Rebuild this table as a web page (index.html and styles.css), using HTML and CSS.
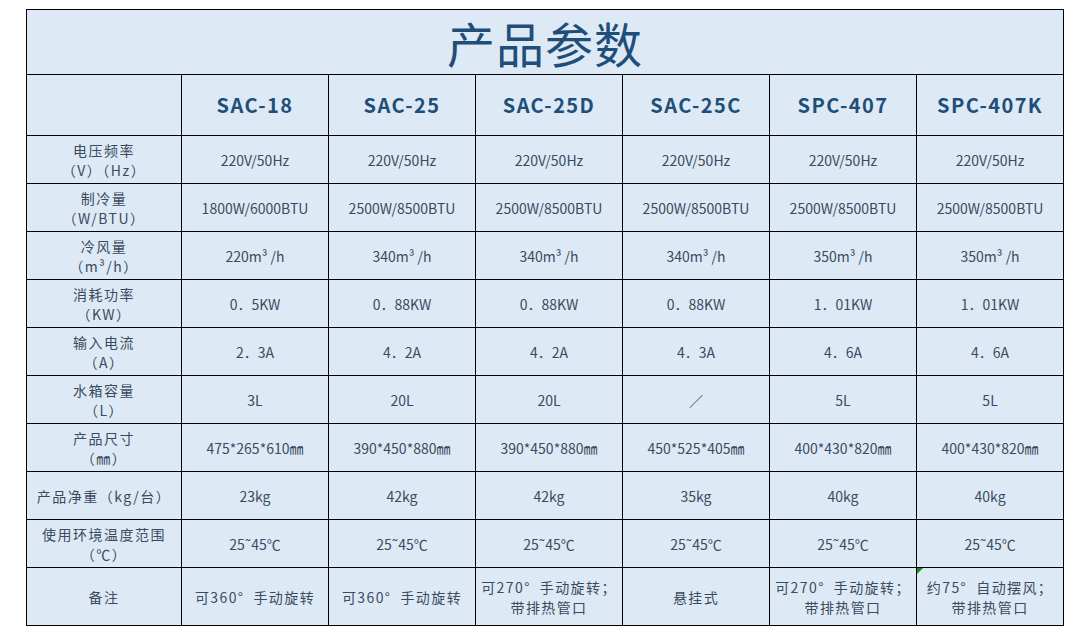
FILE: index.html
```html
<!DOCTYPE html>
<html lang="zh-CN">
<head>
<meta charset="utf-8">
<title>产品参数</title>
<link rel="stylesheet" href="styles.css">
</head>
<body>
<div class="wrap">
<table class="spec">
  <colgroup>
    <col class="c-label">
    <col class="c-val"><col class="c-val"><col class="c-val">
    <col class="c-val"><col class="c-val"><col class="c-val">
  </colgroup>
  <tr class="r-title"><td colspan="7" class="title">产品参数</td></tr>
  <tr class="r-head">
    <td></td>
    <td class="model">SAC-18</td>
    <td class="model">SAC-25</td>
    <td class="model">SAC-25D</td>
    <td class="model">SAC-25C</td>
    <td class="model">SPC-407</td>
    <td class="model">SPC-407K</td>
  </tr>
  <tr class="r-data">
    <td class="label">电压频率<br>（V）（Hz）</td>
    <td>220V/50Hz</td><td>220V/50Hz</td><td>220V/50Hz</td><td>220V/50Hz</td><td>220V/50Hz</td><td>220V/50Hz</td>
  </tr>
  <tr class="r-data">
    <td class="label">制冷量<br>（W/BTU）</td>
    <td>1800W/6000BTU</td><td>2500W/8500BTU</td><td>2500W/8500BTU</td><td>2500W/8500BTU</td><td>2500W/8500BTU</td><td>2500W/8500BTU</td>
  </tr>
  <tr class="r-data">
    <td class="label">冷风量<br>（m³/h）</td>
    <td>220m³ /h</td><td>340m³ /h</td><td>340m³ /h</td><td>340m³ /h</td><td>350m³ /h</td><td>350m³ /h</td>
  </tr>
  <tr class="r-data">
    <td class="label">消耗功率<br>（KW）</td>
    <td>0．5KW</td><td>0．88KW</td><td>0．88KW</td><td>0．88KW</td><td>1．01KW</td><td>1．01KW</td>
  </tr>
  <tr class="r-data">
    <td class="label">输入电流<br>（A）</td>
    <td>2．3A</td><td>4．2A</td><td>4．2A</td><td>4．3A</td><td>4．6A</td><td>4．6A</td>
  </tr>
  <tr class="r-data">
    <td class="label">水箱容量<br>（L）</td>
    <td>3L</td><td>20L</td><td>20L</td><td>／</td><td>5L</td><td>5L</td>
  </tr>
  <tr class="r-data">
    <td class="label">产品尺寸<br>（㎜）</td>
    <td>475*265*610㎜</td><td>390*450*880㎜</td><td>390*450*880㎜</td><td>450*525*405㎜</td><td>400*430*820㎜</td><td>400*430*820㎜</td>
  </tr>
  <tr class="r-data">
    <td class="label">产品净重（kg/台）</td>
    <td>23kg</td><td>42kg</td><td>42kg</td><td>35kg</td><td>40kg</td><td>40kg</td>
  </tr>
  <tr class="r-data">
    <td class="label">使用环境温度范围<br>（℃）</td>
    <td>25˜45℃</td><td>25˜45℃</td><td>25˜45℃</td><td>25˜45℃</td><td>25˜45℃</td><td>25˜45℃</td>
  </tr>
  <tr class="r-last">
    <td class="label">备注</td>
    <td class="note">可360°&nbsp; 手动旋转</td>
    <td class="note">可360°&nbsp; 手动旋转</td>
    <td class="note">可270°&nbsp; 手动旋转；<br>带排热管口</td>
    <td class="note">悬挂式</td>
    <td class="note">可270°&nbsp; 手动旋转；<br>带排热管口</td>
    <td class="note"><span class="flag"></span>约75°&nbsp; 自动摆风；<br>带排热管口</td>
  </tr>
</table>
</div>
</body>
</html>
```

FILE: styles.css
```css
html, body {
  margin: 0;
  padding: 0;
  background: #ffffff;
}

.wrap {
  padding: 9px 0 0 26px;
}

.spec {
  border-collapse: collapse;
  table-layout: fixed;
  width: 1038px;
  background: #ddeaf6;
  font-family: "Noto Sans CJK SC", "Noto Sans", sans-serif;
  color: #3b4a5e;
  font-size: 14px;
  line-height: 20px;
}

.c-label { width: 155px; }
.c-val { width: 147px; }

.spec td {
  border: 1px solid #000000;
  text-align: center;
  vertical-align: middle;
  padding: 0 2px;
  position: relative;
  white-space: nowrap;
}

.r-title { height: 65px; }
.r-head { height: 61px; }
.r-data { height: 48px; }
.r-last { height: 58px; }

.title {
  font-size: 48px;
  line-height: 52px;
  color: #1f4e79;
  letter-spacing: 1px;
  padding-top: 4px;
}

.model {
  font-size: 20px;
  font-weight: 700;
  color: #1f4e79;
  letter-spacing: 1.4px;
}

.label {
  font-size: 14px;
  letter-spacing: 1.5px;
}

.note {
  letter-spacing: 1.4px;
}

.flag {
  position: absolute;
  left: 0;
  top: 0;
  width: 0;
  height: 0;
  border-top: 6px solid #1a8a1a;
  border-right: 6px solid transparent;
}
```
